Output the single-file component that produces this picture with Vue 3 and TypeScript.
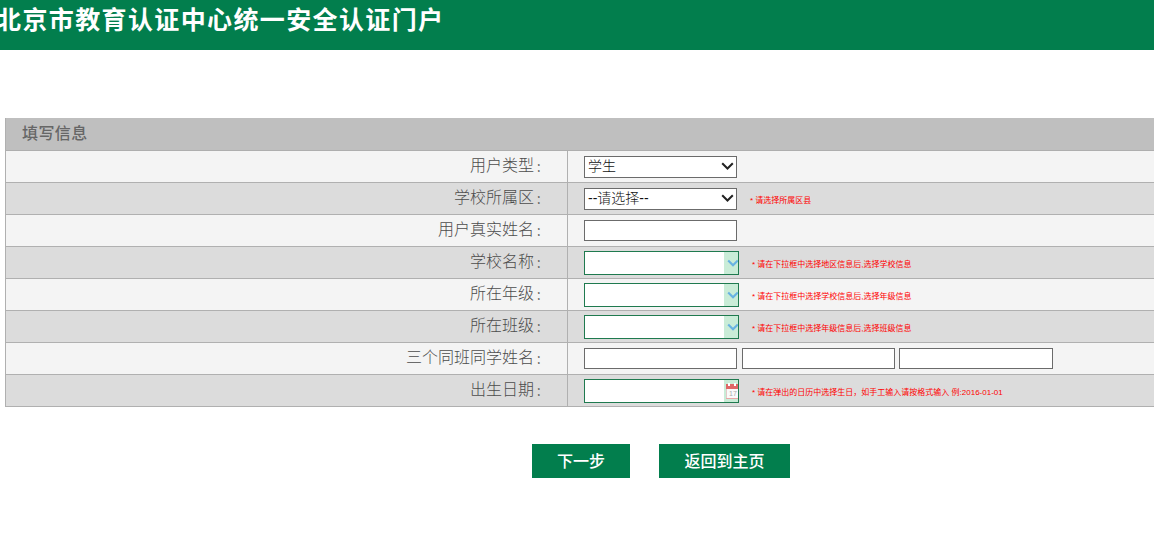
<script setup lang="ts">
import { ref } from 'vue'

type Kind = 'select' | 'text' | 'combo' | 'triple' | 'date'

interface Field {
  label: string
  kind: Kind
  value?: string
  hint?: string
}

const fields = ref<Field[]>([
  { label: '用户类型', kind: 'select', value: '学生' },
  { label: '学校所属区', kind: 'select', value: '--请选择--', hint: '* 请选择所属区县' },
  { label: '用户真实姓名', kind: 'text' },
  { label: '学校名称', kind: 'combo', hint: '* 请在下拉框中选择地区信息后,选择学校信息' },
  { label: '所在年级', kind: 'combo', hint: '* 请在下拉框中选择学校信息后,选择年级信息' },
  { label: '所在班级', kind: 'combo', hint: '* 请在下拉框中选择年级信息后,选择班级信息' },
  { label: '三个同班同学姓名', kind: 'triple' },
  { label: '出生日期', kind: 'date', hint: '* 请在弹出的日历中选择生日，如手工输入请按格式输入 例:2016-01-01' },
])
</script>

<template>
  <div class="page">
    <header class="banner"><h1>北京市教育认证中心统一安全认证门户</h1></header>
    <form class="panel" @submit.prevent>
      <div class="panel-title">填写信息</div>
      <div v-for="f in fields" :key="f.label" class="row">
        <div class="label">{{ f.label }}<span class="colon">：</span></div>
        <div class="cell">
          <div v-if="f.kind === 'select'" class="select">
            <span>{{ f.value }}</span>
            <svg width="13" height="9" viewBox="0 0 13 9"><path d="M1.2 1.2 6.5 6.5 11.8 1.2" fill="none" stroke="#222" stroke-width="2" /></svg>
          </div>
          <input v-else-if="f.kind === 'text'" class="text" type="text" />
          <div v-else-if="f.kind === 'triple'" class="triple">
            <input class="text" type="text" />
            <input class="text" type="text" />
            <input class="text last" type="text" />
          </div>
          <div v-else class="combo">
            <input type="text" />
            <span class="trigger">
              <svg v-if="f.kind === 'combo'" width="14" height="22" viewBox="0 0 14 22"><path d="M4.2 8.5 9 13.2 13.8 8.5" fill="none" stroke="#68b2e2" stroke-width="2.2" /></svg>
              <svg v-else width="14" height="22" viewBox="0 0 14 22">
                <rect x="2" y="4" width="12" height="15" fill="#fafafa" />
                <path d="M2 4h12v5H2z" fill="#df6767" />
                <path d="M4 3h2v3H4zM10 3h2v3h-2z" fill="#fff" />
                <path d="M2 18.5h12" stroke="#e7a5a5" />
                <path d="M2.5 9v9" stroke="#e3c9c9" />
                <text x="5" y="16" class="day">17</text>
              </svg>
            </span>
          </div>
          <span v-if="f.hint" class="hint">{{ f.hint }}</span>
        </div>
      </div>
    </form>
    <div class="actions">
      <button class="next" type="button">下一步</button>
      <button class="back" type="button">返回到主页</button>
    </div>
  </div>
</template>

<style>
body {
  margin: 0;
  background: #fff;
  overflow: hidden;
}
</style>

<style scoped>
.page {
  height: 553px;
  overflow: hidden;
  font-family: "Liberation Sans", "Noto Sans CJK SC", sans-serif;
  color: #666;
}
.banner {
  height: 50px;
  background: #027e4d;
  overflow: hidden;
}
.banner h1 {
  margin: 0 0 0 -4px;
  font-size: 25px;
  line-height: 40px;
  letter-spacing: 1.38px;
  font-weight: 700;
  color: #fff;
  white-space: nowrap;
}
.panel {
  margin: 68px 0 0 5px;
  border-left: 1px solid #b0b0b0;
}
.panel-title {
  box-sizing: border-box;
  height: 33px;
  padding-left: 16px;
  border-bottom: 1px solid #aeaeae;
  background: #bfbfbf;
  font-size: 16px;
  line-height: 31px;
  letter-spacing: 0.4px;
  font-weight: 500;
}
.row {
  box-sizing: border-box;
  height: 32px;
  display: flex;
  border-bottom: 1px solid #b0b0b0;
  background: #f4f4f4;
}
.row:nth-child(odd) {
  background: #dcdcdc;
}
.label {
  box-sizing: border-box;
  width: 562px;
  padding-right: 17px;
  border-right: 1px solid #b0b0b0;
  text-align: right;
  font-size: 16px;
  line-height: 29px;
  font-weight: 300;
  color: #4c4c4c;
}
.colon {
  display: inline-block;
  margin: 0 3px 0 2px;
  font-size: 11px;
  line-height: 1;
  vertical-align: -1px;
  font-weight: 500;
}
.cell {
  flex: 1;
  display: flex;
  align-items: flex-start;
  padding-left: 16px;
}
.select,
.text {
  box-sizing: border-box;
  width: 153px;
  margin: 5px 0 0;
  border: 1px solid #6b6b6b;
  border-radius: 0;
  background: #fff;
}
.select {
  height: 22px;
  display: flex;
  justify-content: space-between;
  padding: 0 2px 0 3px;
  font-size: 14px;
  line-height: 19px;
  font-weight: 300;
  color: #111;
}
.select svg {
  margin-top: 5px;
}
.text {
  height: 21px;
  padding: 0;
}
.triple {
  display: flex;
  gap: 5px;
}
.text.last {
  width: 154px;
  margin-left: -1px;
}
.combo {
  box-sizing: border-box;
  display: flex;
  width: 155px;
  height: 24px;
  margin-top: 4px;
  border: 1px solid #1f7a4f;
  background: #fff;
}
.combo input {
  flex: 1;
  min-width: 0;
  padding: 0;
  border: 0;
  background: transparent;
}
.trigger {
  width: 14px;
  height: 22px;
  background: #c9ecd7;
}
.trigger svg {
  display: block;
}
.day {
  font-size: 7px;
  fill: #aaa;
}
.hint {
  height: 29px;
  margin-left: 13px;
  padding-top: 2px;
  font-size: 8px;
  line-height: 32px;
  color: #f00;
  white-space: nowrap;
}
.actions {
  display: flex;
  gap: 29px;
  margin: 37px 0 0 532px;
}
.actions button {
  height: 34px;
  padding: 0;
  border: 0;
  background: #027e4d;
  color: #fff;
  font-family: inherit;
  font-size: 16px;
  line-height: 35px;
  font-weight: 500;
}
.next {
  width: 98px;
}
.back {
  width: 131px;
}
</style>
